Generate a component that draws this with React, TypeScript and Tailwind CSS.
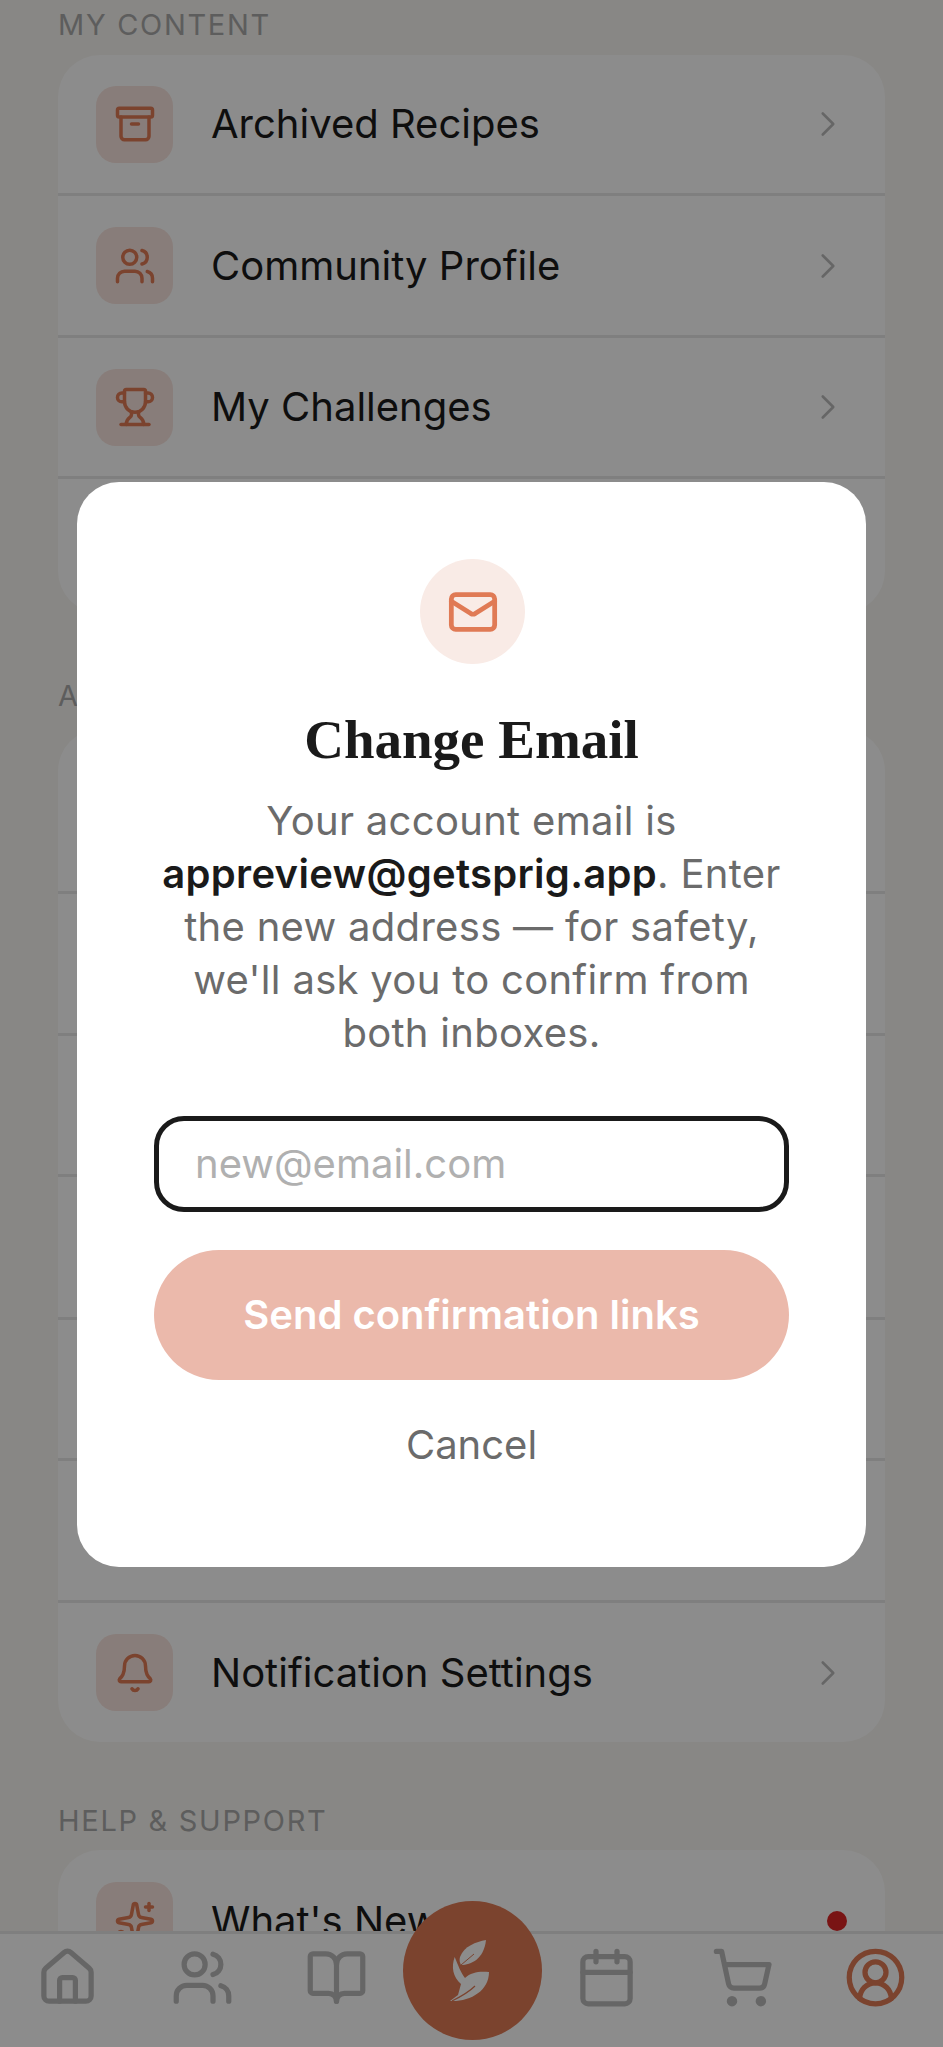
import { Archive, Bell, BookOpen, Calendar, ChevronRight, CircleUserRound, House, Mail, ShoppingCart, Sparkles, Trophy, Users } from 'lucide-react';
import type { ReactNode } from 'react';

function Row({ icon, label, height, last, dot }: { icon?: ReactNode; label?: string; height: string; last?: boolean; dot?: boolean }) {
  return (
    <div className={`flex items-center pl-[38px] pr-[36px] ${height} ${last ? '' : 'border-b-[3px] border-[#e8e8e8]'}`}>
      {icon && (
        <div className="flex h-[77px] w-[77px] shrink-0 items-center justify-center rounded-[20px] bg-[#f8e4de] text-[#e07a55]">
          {icon}
        </div>
      )}
      {label && <span className="ml-[38px] flex-1 text-[40px] text-[#1a1a1a]">{label}</span>}
      {label && !dot && <ChevronRight size={42} strokeWidth={1.5} className="text-[#bbbbbb]" />}
      {dot && <span className="mr-[2px] h-[20px] w-[20px] rounded-full bg-[#dc2626]" />}
    </div>
  );
}

function SectionLabel({ children, className }: { children: ReactNode; className: string }) {
  return <p className={`text-[29px] leading-[36px] tracking-[1.7px] text-[#aaaaaa] ${className}`}>{children}</p>;
}

function SprigLogo() {
  return (
    <svg viewBox="0 0 90 100" className="h-[100px] w-[90px]">
      <path d="M58 19C48 21 36 25 32 36c-1 3 0 6 1 8 10 0 23-6 25-25z" fill="#fff" />
      <path d="M33 44 46 33" stroke="#e07a55" strokeWidth="1" fill="none" />
      <path d="M26.7 36C23 46 25 56 33 63l-3 11-8 6c20 1 39-10 39-29-9-1-18 0-24 6-4-5-7-13-10.300-21z" fill="#fff" />
      <path d="M24 80c8-4 16-8 23-15" stroke="#e07a55" strokeWidth="1.200" fill="none" />
    </svg>
  );
}

export default function App() {
  const navIcon = 'text-[#bbbbbb]';

  return (
    <div className="relative h-[2047px] w-[943px] overflow-hidden bg-[#f8f6f2] font-[Inter,sans-serif]">
      <div className="px-[58px] pt-[7px]">
        <SectionLabel className="mb-[12px]">MY CONTENT</SectionLabel>
        <div className="overflow-hidden rounded-[42px] bg-white">
          <Row height="h-[141px]" icon={<Archive size={42} />} label="Archived Recipes" />
          <Row height="h-[142px]" icon={<Users size={42} />} label="Community Profile" />
          <Row height="h-[141px]" icon={<Trophy size={42} />} label="My Challenges" />
          <Row height="h-[134px]" last />
        </div>

        <SectionLabel className="mb-[15px] mt-[65px]">ACCOUNT</SectionLabel>
        <div className="overflow-hidden rounded-[42px] bg-white">
          <Row height="h-[165px]" />
          <Row height="h-[142px]" />
          <Row height="h-[141px]" />
          <Row height="h-[143px]" />
          <Row height="h-[141px]" />
          <Row height="h-[142px]" />
          <Row height="h-[139px]" last icon={<Bell size={42} />} label="Notification Settings" />
        </div>

        <SectionLabel className="mb-[11px] mt-[61px]">HELP &amp; SUPPORT</SectionLabel>
        <div className="overflow-hidden rounded-[42px] bg-white">
          <Row height="h-[141px]" last dot icon={<Sparkles size={42} />} label="What's New" />
        </div>
      </div>

      {/* bottom tab bar */}
      <nav className="absolute inset-x-0 bottom-0 grid h-[116px] grid-cols-7 border-t-[3px] border-[#e8e8e8] bg-white pt-[12px]">
        <div className="flex justify-center"><House size={63} className={navIcon} /></div>
        <div className="flex justify-center"><Users size={63} className={navIcon} /></div>
        <div className="flex justify-center"><BookOpen size={63} className={navIcon} /></div>
        <div className="flex justify-center pl-[2px]">
          <div className="-mt-[45px] flex h-[139px] w-[139px] shrink-0 items-center justify-center rounded-full bg-[#e07a55]">
            <SprigLogo />
          </div>
        </div>
        <div className="flex justify-center"><Calendar size={63} className={navIcon} /></div>
        <div className="flex justify-center pl-[3px]"><ShoppingCart size={63} className={navIcon} /></div>
        <div className="flex justify-center"><CircleUserRound size={63} className="text-[#e07a55]" /></div>
      </nav>

      {/* modal */}
      <div className="absolute inset-0 flex items-center justify-center bg-black/45 pt-[2px]">
        <div className="flex h-[1085px] w-[789px] flex-col items-center rounded-[42px] bg-white px-[77px] pt-[77px]">
          <div className="ml-[2px] flex h-[105px] w-[105px] items-center justify-center rounded-full bg-[#f9ebe6] text-[#e07a55]">
            <Mail size={52} strokeWidth={2.2} />
          </div>
          <h2 className="mt-[41px] text-center font-['Liberation_Serif',serif] text-[55px] font-bold leading-[70px] text-[#1a1a1a]">Change Email</h2>
          <p className="mt-[19px] whitespace-nowrap text-center text-[40px] leading-[53px] tracking-[0.3px] text-[#6b6b6b]">
            Your account email is<br />
            <strong className="font-semibold text-[#1a1a1a]">appreview@getsprig.app</strong>. Enter<br />
            the new address — for safety,<br />
            we'll ask you to confirm from<br />
            both inboxes.
          </p>
          <div className="mt-[57px] flex h-[96px] w-full items-center rounded-[30px] border-[5px] border-[#1a1a1a] pl-[36px] text-[40px] text-[#b0b0b0]">
            new@email.com
          </div>
          <button className="mt-[38px] h-[130px] w-full rounded-full bg-[#ebb9ab] text-[40px] font-semibold text-white">
            Send confirmation links
          </button>
          <button className="mt-[42px] text-[40px] leading-[46px] text-[#6b6b6b]">Cancel</button>
        </div>
      </div>
    </div>
  );
}
